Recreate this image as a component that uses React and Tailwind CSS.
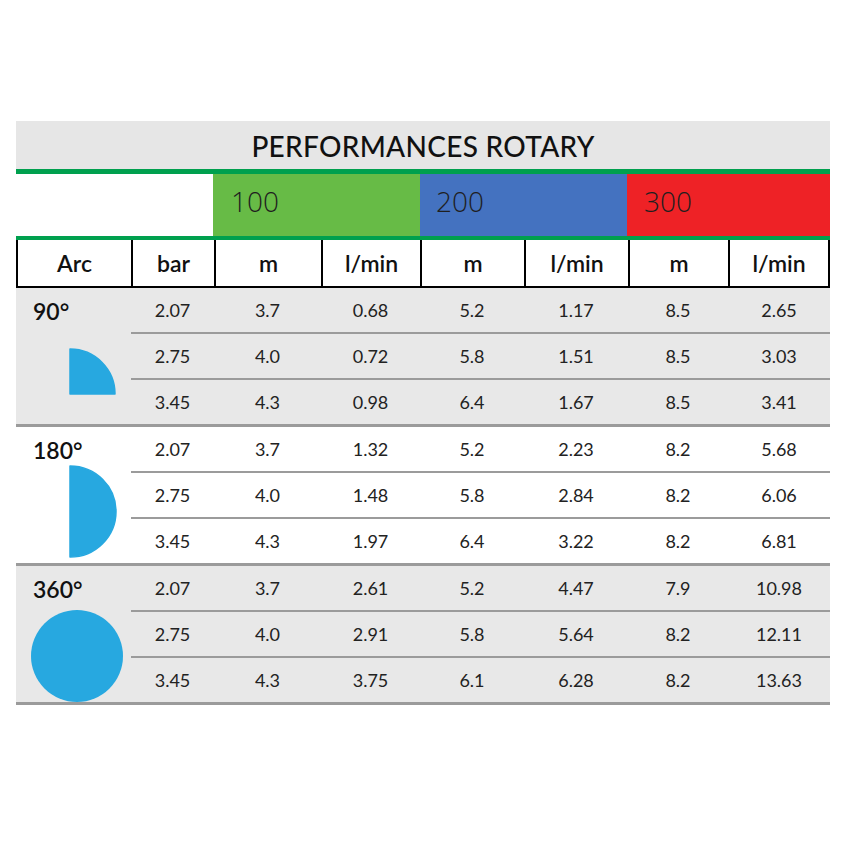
import React from "react";

const cols = "grid grid-cols-[115px_83px_107px_99px_104px_104px_100px_102px]";
const dataCols = "grid grid-cols-[83px_107px_99px_104px_104px_100px_102px]";

const groups = [
  {
    arc: "90°",
    bg: "bg-[#e8e8e8]",
    shape: "quarter",
    rows: [
      ["2.07", "3.7", "0.68", "5.2", "1.17", "8.5", "2.65"],
      ["2.75", "4.0", "0.72", "5.8", "1.51", "8.5", "3.03"],
      ["3.45", "4.3", "0.98", "6.4", "1.67", "8.5", "3.41"],
    ],
  },
  {
    arc: "180°",
    bg: "bg-white",
    shape: "half",
    rows: [
      ["2.07", "3.7", "1.32", "5.2", "2.23", "8.2", "5.68"],
      ["2.75", "4.0", "1.48", "5.8", "2.84", "8.2", "6.06"],
      ["3.45", "4.3", "1.97", "6.4", "3.22", "8.2", "6.81"],
    ],
  },
  {
    arc: "360°",
    bg: "bg-[#e8e8e8]",
    shape: "full",
    rows: [
      ["2.07", "3.7", "2.61", "5.2", "4.47", "7.9", "10.98"],
      ["2.75", "4.0", "2.91", "5.8", "5.64", "8.2", "12.11"],
      ["3.45", "4.3", "3.75", "6.1", "6.28", "8.2", "13.63"],
    ],
  },
];

function ArcShape({ type }) {
  if (type === "quarter") {
    return (
      <svg width="48" height="47" viewBox="0 0 48 47" className="mt-[25px] ml-[53px]">
        <path d="M1 46 L1 1 A45 45 0 0 1 46 46 Z" fill="#27a8e0" stroke="#27a8e0" strokeWidth="1.5" strokeLinejoin="round" />
      </svg>
    );
  }
  if (type === "half") {
    return (
      <svg width="48" height="93" viewBox="0 0 48 93" className="mt-[3px] ml-[53px]">
        <path d="M1 1 A46 45.5 0 0 1 1 92 Z" fill="#27a8e0" stroke="#27a8e0" strokeWidth="1.5" strokeLinejoin="round" />
      </svg>
    );
  }
  return <div className="mt-[9px] ml-[15px] w-[92px] h-[92px] rounded-full bg-[#27a8e0]" />;
}

const headers = ["Arc", "bar", "m", "l/min", "m", "l/min", "m", "l/min"];

export default function App() {
  return (
    <div className="w-[850px] h-[850px] bg-white pt-[121px] font-['Lato',sans-serif] text-[#1c1c1c]">
      <div className="ml-[16px] w-[814px]">
        {/* titre */}
        <div className="h-[48px] bg-[#e6e6e6] flex items-center justify-center">
          <span className="text-[28px] font-medium tracking-[0.3px] text-[#111] leading-none pt-[2px]">
            PERFORMANCES ROTARY
          </span>
        </div>

        {/* bande modèles */}
        <div className="border-t-[5px] border-b-[4px] border-[#00a04e] grid grid-cols-[197px_207px_207px_203px] h-[71px]">
          <div className="bg-white" />
          <div className="bg-[#67bb46] flex items-center pl-[18px] pb-[8px]">
            <span className="font-['Open_Sans',sans-serif] font-light text-[28px] text-[#1f1f1f]">100</span>
          </div>
          <div className="bg-[#4472c0] flex items-center pl-[16px] pb-[8px]">
            <span className="font-['Open_Sans',sans-serif] font-light text-[28px] text-[#1f1f1f]">200</span>
          </div>
          <div className="bg-[#ee2226] flex items-center pl-[17px] pb-[8px]">
            <span className="font-['Open_Sans',sans-serif] font-light text-[28px] text-[#1f1f1f]">300</span>
          </div>
        </div>

        {/* en-tetes */}
        <div className={`${cols} h-[48px] border-b-2 border-black bg-white`}>
          {headers.map((h, i) => (
            <div
              key={i}
              className={`flex items-center justify-center text-[23px] font-semibold text-[#111] border-l-2 border-black ${i === 7 ? "border-r-2" : ""}`}
            >
              {h}
            </div>
          ))}
        </div>

        {/* groupes */}
        {groups.map((g) => (
          <div key={g.arc} className={`flex ${g.bg} border-b-[3px] border-[#9b9b9b]`}>
            <div className="w-[115px] flex flex-col pt-[12px]">
              <span className="pl-[17px] text-[23px] font-semibold leading-[23px] text-[#111]">{g.arc}</span>
              <ArcShape type={g.shape} />
            </div>
            <div className="flex-1">
              {g.rows.map((r, ri) => (
                <div
                  key={ri}
                  className={`${dataCols} h-[44px] ${ri < 2 ? "h-[46px] border-b-2 border-[#9b9b9b]" : ""}`}
                >
                  {r.map((v, vi) => (
                    <div key={vi} className="flex items-center justify-center text-[18px] text-[#222]">
                      {v}
                    </div>
                  ))}
                </div>
              ))}
            </div>
          </div>
        ))}
      </div>
    </div>
  );
}
